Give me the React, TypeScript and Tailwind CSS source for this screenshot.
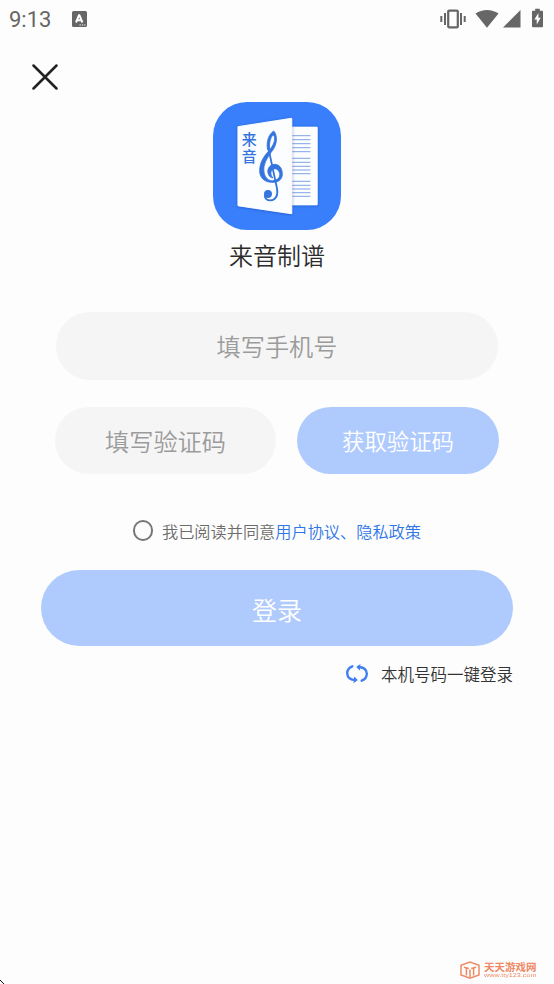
import React, { useState } from 'react';

const fieldStyles = "flex items-center justify-center rounded-full bg-[#f5f5f5] text-[24.2px] text-[#9b9b9b]";

const StatusBar: React.FC = () => (
  <div className="flex h-10 items-center pl-[9px] pr-[10px] text-[#666666]">
    <span className="font-[Roboto,sans-serif] text-[22px] font-normal leading-10">9:13</span>
    <svg className="ml-[21px] -mt-[2px]" width="15" height="16" viewBox="0 0 15 16">
      <rect width="15" height="16" rx="1.5" fill="currentColor" />
      <path d="M4 11.5 7 4.2h.4l3 7.3M5.2 9.2h4" fill="none" stroke="#fff" strokeWidth="2" />
      <path d="M7.5 14h1.3m1 0h1.3m1 0h1.3" stroke="#fff" strokeWidth="1.2" />
    </svg>
    <svg className="ml-auto -mt-[3px]" width="26" height="20" viewBox="0 0 26 20" fill="none" stroke="currentColor">
      <rect x="8.200" y="1.600" width="9.600" height="16.800" rx="1" strokeWidth="2.200" />
      <path d="M5 4v12M21 4v12" strokeWidth="2" />
      <path d="M1.300 7v6M24.700 7v6" strokeWidth="2" />
    </svg>
    <svg className="ml-[9px] -mt-[3px]" width="24" height="20" viewBox="0 0 25 20">
      <path d="M12.500 19 .500 4.400C7.500-.600 17.500-.600 24.500 4.400Z" fill="currentColor" />
    </svg>
    <svg className="ml-[4px] -mt-[2px]" width="18" height="18" viewBox="0 0 18 18">
      <path d="M17.500 0v17.500H0Z" fill="currentColor" />
    </svg>
    <svg className="ml-[11px] -mt-[4px] mr-px" width="11" height="20" viewBox="0 0 12 20">
      <path d="M3.500 0h5v2H11q1 0 1 1v16q0 1-1 1H1q-1 0-1-1V3q0-1 1-1h2.500Z" fill="currentColor" />
      <path d="M7 4.500 2.600 11.500h2.600V17L9.500 9.800H7Z" fill="#fff" />
    </svg>
  </div>
);

const AppLogo: React.FC = () => (
  <svg width="128" height="128" viewBox="0 0 128 128">
    <defs>
      <filter id="page" x="-20%" y="-20%" width="140%" height="140%">
        <feDropShadow dx="0" dy="0.500" stdDeviation="1.500" floodColor="#1745ad" floodOpacity="0.600" />
      </filter>
    </defs>
    <rect width="128" height="128" rx="34" fill="#397ffb" />
    <rect x="70" y="24.700" width="34.700" height="78.600" rx="1" fill="#fbfdff" filter="url(#page)" />
    <path
      d="M79 33.700h18.500M79 37.700h18.500M79 41.700h18.500M79 45.700h18.500M79 49.700h18.500M79 56.300h18.500M79 60.300h18.500M79 64.300h18.500M79 68h18.500M79 71.700h18.500M79 79.300h18.500M79 83.300h18.500M79 87h18.500M79 90.700h18.500M79 94.300h18.500"
      stroke="#7fa3e3"
      strokeWidth="1"
    />
    <path d="M25 24.700 78.700 16.300v95.400L25 103.700Z" fill="#fbfdff" stroke="#fbfdff" strokeLinejoin="round" filter="url(#page)" />
    <g fill="#3474de" className="font-['Noto_Sans_CJK_SC',sans-serif] text-[15px] font-medium">
      <text x="28.700" y="42.500">来</text>
      <text x="28.700" y="59.800">音</text>
    </g>
    {/* treble clef */}
    <g transform="translate(17 18) scale(.3333)" fill="#3474de" stroke="#3474de" strokeWidth="2.500" strokeLinejoin="round">
      <path d="M131 33C142 44 142 68 131 86C121 101 106 118 102 140C99 163 108 181 128 183L128 187C103 188 88 172 89 151C90 130 97 116 111 99C124 84 133 72 134 57C134 50 132 46 129 44C121 54 117 68 119 88L113 90C108 66 116 43 131 33Z" />
      <path d="M157 160C156 142 146 133 134 133C117 134 110 150 115 162C118 170 123 173 129 174C121 165 121 155 127 149C138 141 147 151 149 160C151 172 143 181 128 182L128 187C148 188 158 175 157 160Z" />
      <path d="M116 88 141 205C145 227 137 240 121 241C111 241 105 235 104 226" fill="none" strokeWidth="5.500" />
      <circle cx="114" cy="222" r="11" />
    </g>
  </svg>
);

const SwitchIcon: React.FC = () => (
  <svg width="22" height="20" viewBox="0 0 22 20" fill="none" stroke="#3f7ff0" strokeWidth="2.400" strokeLinecap="round">
    <path d="M6.300 2.300C3 3.600 1.200 6 1.200 9.300C1.200 13.500 4.500 16 9.500 16" />
    <path d="M15.700 16.700C19 15.400 20.800 13 20.800 9.700C20.800 5.500 17.500 3 12.500 3" />
    <path d="M8.200 12.500 11.800 16 7.500 19.200ZM13.800 6.500 10.200 3 14.500 0Z" fill="#3f7ff0" stroke="none" />
  </svg>
);

const SiteMark: React.FC = () => (
  <div className="flex items-center gap-1 text-[#ee8a66]">
    <svg width="20" height="18" viewBox="0 0 20 18" fill="none" stroke="currentColor" strokeWidth="1.500">
      <path d="M1 4.300 10 1l9 3.300V14l-9 3.200L1 14Z" />
      <path d="M4 6.300 8.800 7.500M6.400 7v7.500M11.200 7.500 16 6.300M13.600 7v7.500M10 8.500v8" />
    </svg>
    <div className="flex w-[53px] flex-col">
      <span className="text-[10.500px] font-bold leading-[11px]">天天游戏网</span>
      <span className="w-[42px] origin-left scale-x-[1.200] font-['Liberation_Sans',sans-serif] text-[6px] leading-[7px]">www.tty123.com</span>
    </div>
  </div>
);

const App: React.FC = () => {
  const [agreed, setAgreed] = useState(false);

  return (
    <div className="flex h-[984px] w-[554px] flex-col overflow-hidden bg-[#fdfdfd] font-['Noto_Sans_CJK_SC',sans-serif] font-[350]">
      <StatusBar />

      <div className="flex h-[62px] pl-8 pt-6">
        <button className="h-[26px] w-[26px]" aria-label="关闭">
          <svg width="26" height="26" viewBox="0 0 26 26">
            <path d="m1.500 1.500 23 23m0-23-23 23" stroke="#222" strokeWidth="2.500" strokeLinecap="round" />
          </svg>
        </button>
      </div>

      <div className="flex flex-col items-center">
        <AppLogo />
        <h1 className="mt-[7px] text-[24px] font-[350] leading-9 text-[#2b2b2b]">来音制谱</h1>
      </div>

      <div className={`${fieldStyles} ml-14 mt-[39px] h-[68px] w-[442px]`}>填写手机号</div>

      <div className="ml-[55px] mt-[27px] flex gap-[21px]">
        <div className={`${fieldStyles} h-[67px] w-[221px] pt-px`}>填写验证码</div>
        <button className="flex h-[67px] w-[202px] items-center justify-center rounded-full bg-[#afcbfd] text-[22.400px] text-white">
          获取验证码
        </button>
      </div>

      <div className="ml-[133px] mt-[45px] flex h-6 items-center text-[16.200px]">
        <button
          aria-label="同意"
          onClick={() => setAgreed(!agreed)}
          className={`-mt-px h-[21px] w-5 rounded-full border-2 border-[#777] ${agreed ? 'bg-[#3f7ff0]' : ''}`}
        />
        <span className="ml-[9px] text-[#6c6c6c]">我已阅读并同意</span>
        <span className="text-[#2f76e8]">用户协议、隐私政策</span>
      </div>

      <button className="ml-[41px] mt-[27px] flex h-[76px] w-[472px] items-center justify-center rounded-full bg-[#afcbfd] pt-[3px] text-[25px] text-white">
        登录
      </button>

      <div className="mr-[41px] mt-4 flex h-6 items-center justify-end gap-[13px] text-[16.500px] text-[#333]">
        <SwitchIcon />
        <span>本机号码一键登录</span>
      </div>

      <div className="mt-auto flex items-end justify-between pr-[17px]">
        <svg width="4" height="4" viewBox="0 0 4 4">
          <path d="M0 0h1v1h1v1h1v1h1v1H3V3H2V2H1V1H0Z" fill="#111" />
        </svg>
        <div className="pb-[5px]">
          <SiteMark />
        </div>
      </div>
    </div>
  );
};

export default App;
